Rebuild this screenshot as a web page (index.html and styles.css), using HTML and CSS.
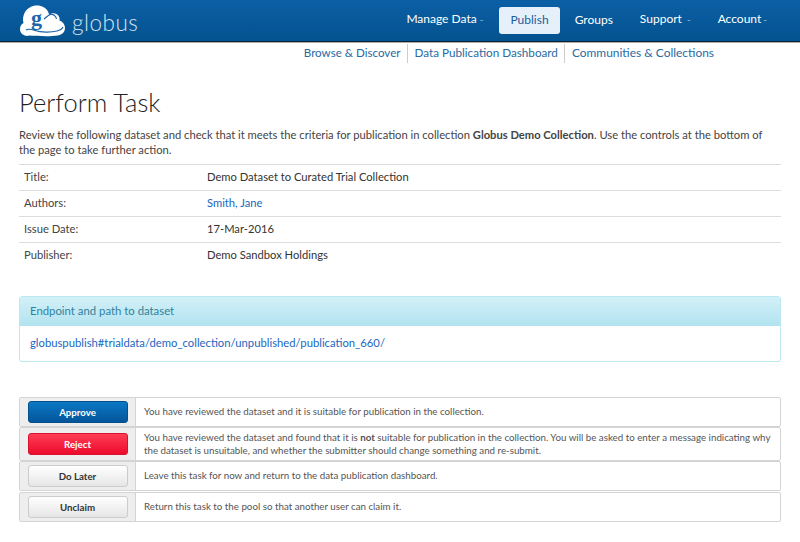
FILE: index.html
```html
<!DOCTYPE html>
<html lang="en">
<head>
<meta charset="utf-8">
<title>Perform Task</title>
<link rel="stylesheet" href="styles.css">
</head>
<body>
<header class="topbar">
  <a class="brand" href="#">
    <svg class="cloud" width="46" height="32" viewBox="0 0 46 32">
      <path fill="#fff" d="M8 31C3 31 0 28 0 24c0-3 1.500-5 3.500-6C2.500 15 3 11 4.500 8 7 3 12 .5 17 .5c5 0 9 2.500 11 6 .500 1 1 2.500 1 3.500 2-2 5-2.500 7.500-1 2.500 1.500 3.500 4 3 6.500 3 1 5.500 4 5.500 7.500 0 4.500-3.500 7-7.500 7.500-8 1.200-20 .500-29 0z"/>
      <path fill="none" stroke="#1c65a8" stroke-width="1.200" d="M24 14c2-1.500 4-4 6.500-4.500 3-.5 5.500 1.500 6 4.500 M6 25c2-1.500 6-.5 9 .5 6 2 16 2 22 .5 2.500-.6 5-2 6-4"/>
      <text x="11" y="20" class="cloud-g">g</text>
    </svg>
    <span class="wordmark">globus</span>
  </a>
  <nav class="mainnav">
    <a href="#">Manage Data <span class="caret">-</span></a>
    <a href="#" class="active">Publish</a>
    <a href="#">Groups</a>
    <a href="#">Support <span class="caret">-</span></a>
    <a href="#" class="account">Account<span class="caret">-</span></a>
  </nav>
</header>
<nav class="subnav">
  <a href="#">Browse &amp; Discover</a>
  <a href="#">Data Publication Dashboard</a>
  <a href="#">Communities &amp; Collections</a>
</nav>
<main class="content">
  <h1>Perform Task</h1>
  <p class="intro">Review the following dataset and check that it meets the criteria for publication in collection <strong>Globus Demo Collection</strong>. Use the controls at the bottom of the page to take further action.</p>
  <table class="meta">
    <tr><th>Title:</th><td>Demo Dataset to Curated Trial Collection</td></tr>
    <tr><th>Authors:</th><td><a href="#">Smith, Jane</a></td></tr>
    <tr><th>Issue Date:</th><td>17-Mar-2016</td></tr>
    <tr><th>Publisher:</th><td>Demo Sandbox Holdings</td></tr>
  </table>
  <section class="panel">
    <div class="panel-head">Endpoint and path to dataset</div>
    <div class="panel-body"><a href="#">globuspublish#trialdata/demo_collection/unpublished/publication_660/</a></div>
  </section>
  <div class="actions">
    <div class="action">
      <div class="action-btn"><button class="btn btn-blue">Approve</button></div>
      <div class="action-text">You have reviewed the dataset and it is suitable for publication in the collection.</div>
    </div>
    <div class="action action-tall">
      <div class="action-btn"><button class="btn btn-red">Reject</button></div>
      <div class="action-text">You have reviewed the dataset and found that it is <strong>not</strong> suitable for publication in the collection. You will be asked to enter a message indicating why the dataset is unsuitable, and whether the submitter should change something and re-submit.</div>
    </div>
    <div class="action">
      <div class="action-btn"><button class="btn">Do Later</button></div>
      <div class="action-text">Leave this task for now and return to the data publication dashboard.</div>
    </div>
    <div class="action">
      <div class="action-btn"><button class="btn">Unclaim</button></div>
      <div class="action-text">Return this task to the pool so that another user can claim it.</div>
    </div>
  </div>
</main>
</body>
</html>
```
FILE: styles.css
```css
* { box-sizing: border-box; }
html, body { margin: 0; padding: 0; }
body { width: 800px; height: 542px; overflow: hidden; background: #fff; font-family: Lato, "Open Sans", sans-serif; color: #444; font-size: 11.2px; }
a { color: #1a66c0; text-decoration: none; }

.topbar { height: 42px; display: flex; justify-content: space-between; align-items: flex-start; padding: 5px 33px 0 20px; background: linear-gradient(#0b5fa5, #04538f); border-bottom: 1px solid #02233f; box-shadow: 0 1px 0 #b5aea3; }
.brand { display: flex; align-items: center; gap: 6px; }
.cloud { display: block; }
.cloud-g { font-family: "Liberation Serif", serif; font-size: 22px; font-weight: 700; fill: #1c65a8; }
.wordmark { font-size: 22.500px; font-weight: 300; color: #d5e3ef; letter-spacing: .5px; padding-top: 2px; }
.mainnav { display: flex; align-items: center; gap: 5px; padding-top: 1px; }
.mainnav a { color: #fff; font-size: 12px; padding: 6px 11px 8px; border-radius: 3px; line-height: 13px; }
.mainnav a.active { background: #e6f0fb; color: #1a5f9e; margin-right: -1px; }
.mainnav .account { padding-right: 0; }
.caret { opacity: .6; font-size: 10px; margin-left: 2px; }
.mainnav a:first-child .caret { margin-left: 0; }

.subnav { display: flex; justify-content: flex-end; padding: 1px 79px 0 0; height: 20px; margin-top: 1px; }
.subnav a { color: #2a6a9f; font-size: 11.700px; padding: 0 6px 0 7px; line-height: 17px; border-left: 1px solid #ccc; }
.subnav a:first-child { border-left: 0; font-size: 11.600px; }
.subnav a:last-child { font-size: 11.950px; padding-right: 7px; }

.content { padding: 0 19px; }
h1 { margin: 24px 0 0; font-size: 25.500px; font-weight: 300; line-height: 30px; color: #222; }
.intro { margin: 10px 0 0; line-height: 15px; }
.meta { width: 100%; margin-top: 7px; border-collapse: collapse; border-top: 1px solid #ddd; }
.meta tr { height: 26px; border-bottom: 1px solid #ddd; }
.meta tr:last-child { border-bottom: 0; }
.meta th { width: 188px; padding: 0 0 2px 5px; text-align: left; font-weight: 400; }
.meta td { padding: 0 0 2px; color: #333; }

.panel { margin-top: 27px; border: 1px solid #bce8f1; border-radius: 3px; font-size: 11.350px; }
.panel-head { height: 29px; line-height: 28px; padding: 0 10px; color: #31819c; background: linear-gradient(#d2f0f7, #b2e3f1); }
.panel-body { height: 35px; line-height: 33px; padding: 0 10px; font-size: 11.280px; }

.actions { margin-top: 35px; }
.action { display: flex; border: 1px solid #d4d4d4; border-radius: 2px; height: 30px; }
.action:last-child { margin-top: 1px; }
.action-tall { height: 34px; }
.action-btn { flex: 0 0 116px; display: flex; align-items: center; justify-content: center; background: #eee; border-right: 1px solid #d4d4d4; }
.action-text { flex: 1; align-self: center; padding: 0 8px 1px; font-size: 9.750px; line-height: 13px; color: #555; }
.action-tall .action-text { padding-bottom: 0; }
.btn { width: 100px; height: 22px; padding: 0; border: 1px solid #ccc; border-radius: 3px; font: 700 9.700px Lato, sans-serif; color: #333; background: linear-gradient(#fff, #e6e6e6); }
.btn-blue { color: #fff; border-color: #04508c; background: linear-gradient(#0b78c4, #04559b); }
.btn-red { color: #fff; border-color: #d9122e; background: linear-gradient(#ff3d55, #ec0c2c); }
```
